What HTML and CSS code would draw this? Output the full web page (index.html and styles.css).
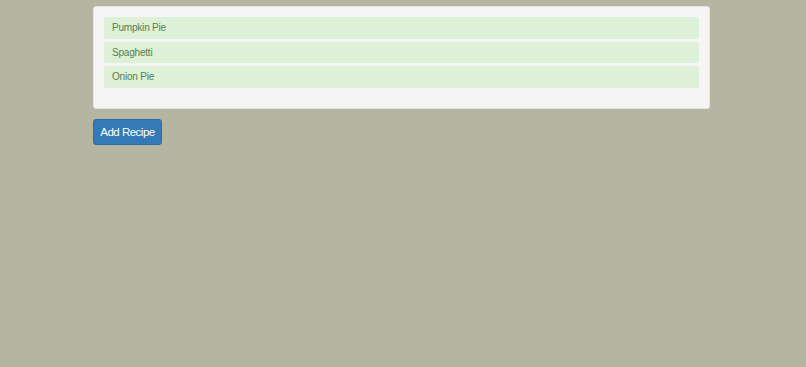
FILE: index.html
```html
<!DOCTYPE html>
<html lang="en">
<head>
  <meta charset="UTF-8">
  <title>Recipe Box</title>
  <link rel="stylesheet" href="styles.css">
</head>
<body>
  <div class="container">
    <div class="well">
      <div class="recipe">Pumpkin Pie</div>
      <div class="recipe">Spaghetti</div>
      <div class="recipe">Onion Pie</div>
    </div>
    <button class="btn-add">Add Recipe</button>
  </div>
</body>
</html>
```

FILE: styles.css
```css
body {
  margin: 0;
  background: #b5b5a1;
  font-family: 'Liberation Sans', Arial, sans-serif;
}

.container {
  width: 617px;
  margin-left: 93px;
  padding-top: 6px;
}

.well {
  background: #f5f5f5;
  border: 1px solid #e3e3e3;
  border-radius: 3px;
  padding: 10px 10px 20px;
  display: flex;
  flex-direction: column;
  gap: 3px;
}

.recipe {
  background: #dff0d8;
  color: #53804f;
  font-size: 10px;
  letter-spacing: -0.2px;
  height: 21.5px;
  line-height: 21px;
  padding: 0 8px;
  border-radius: 2px;
}

.btn-add {
  margin-top: 10px;
  width: 69px;
  height: 26px;
  padding: 0;
  border: 1px solid #2e6da4;
  border-radius: 3px;
  background: #337ab7;
  color: #fff;
  font-family: 'Liberation Sans', Arial, sans-serif;
  font-size: 11.5px;
  letter-spacing: -0.5px;
}
```
